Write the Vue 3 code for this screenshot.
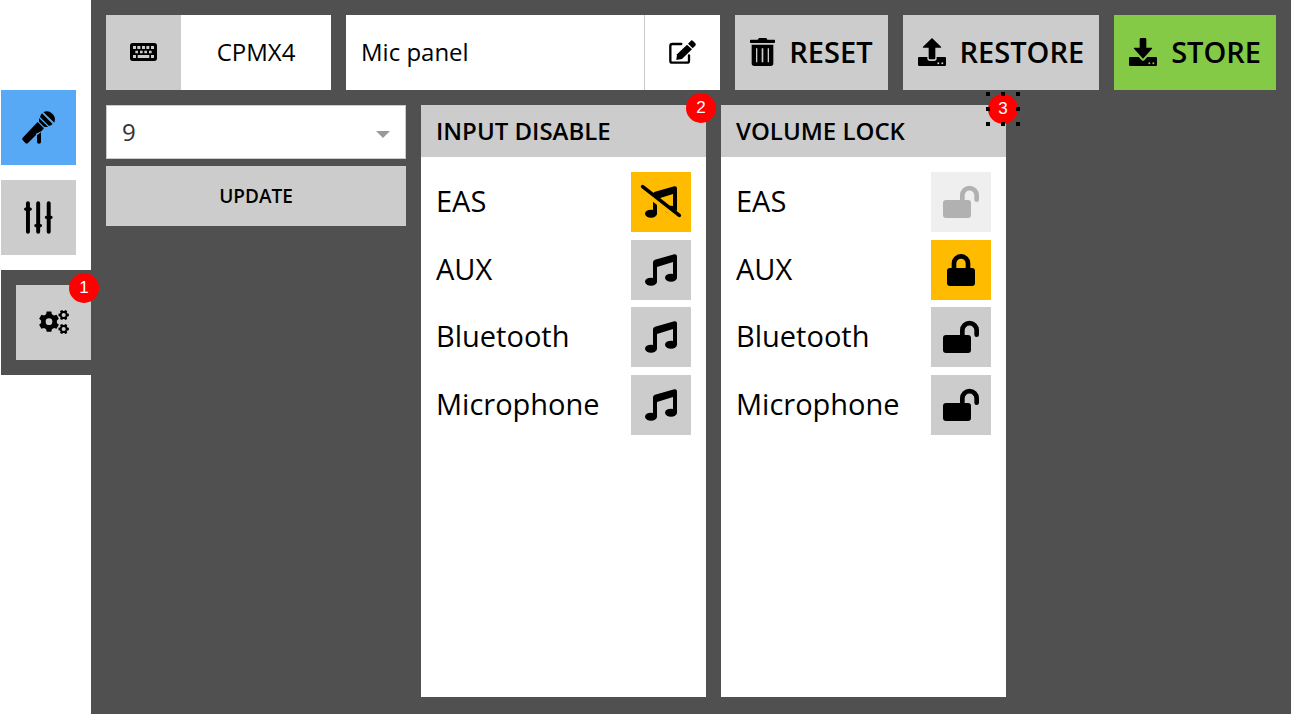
<script setup>
import { ref } from 'vue'

const device = ref('CPMX4')
const panelName = ref('Mic panel')
const preset = ref('9')

const inputs = ref([
  { name: 'EAS', muted: true },
  { name: 'AUX', muted: false },
  { name: 'Bluetooth', muted: false },
  { name: 'Microphone', muted: false },
])

const locks = ref([
  { name: 'EAS', locked: false, disabled: true },
  { name: 'AUX', locked: true, disabled: false },
  { name: 'Bluetooth', locked: false, disabled: false },
  { name: 'Microphone', locked: false, disabled: false },
])

// Outline of a six-toothed gear with a round hole in the middle
function gear(cx, cy, outer, inner, hole, turn) {
  const points = []
  for (let i = 0; i < 6; i++) {
    const mid = turn + i * 60
    for (const [offset, radius] of [[-21, inner], [-13, outer], [13, outer], [21, inner]]) {
      const a = ((mid + offset) * Math.PI) / 180
      points.push(`${(cx + radius * Math.cos(a)).toFixed(1)} ${(cy + radius * Math.sin(a)).toFixed(1)}`)
    }
  }
  return `M${points.join('L')}ZM${cx - hole} ${cy}a${hole} ${hole} 0 1 0 ${2 * hole} 0a${hole} ${hole} 0 1 0 ${-2 * hole} 0Z`
}

const gears = [
  gear(30, 35, 31, 24, 10, 30),
  gear(74, 15, 16, 12, 6, 0),
  gear(74, 57, 16, 12, 6, 0),
].join('')
</script>

<template>
  <div class="app">
    <nav class="sidebar" aria-label="Sections">
      <button class="tile blue" type="button" aria-label="Microphone">
        <svg width="34" height="34" viewBox="0 0 102 102">
          <path d="M64 6A25 25 0 0 1 97 38Z" />
          <path d="M60 10L92 42A25 25 0 0 1 81 48L54 21A25 25 0 0 1 60 10Z" />
          <path d="M51 24L78 50A25 25 0 0 1 66 50L51 35Z" />
          <path d="M47 36L66 55L58 64L42 71V75L18 99Q14 102 10 99L2 90Q-1 87 2 83Z" />
          <path d="M45 76L57 67V96Q57 101 51 101T45 96Z" />
        </svg>
      </button>
      <button class="tile" type="button" aria-label="Mixer">
        <svg width="29" height="33" viewBox="0 0 88 99">
          <path class="line thick" d="M12 6V93M43 6V93M75 6V93" />
          <path class="line knob" d="M5 24H19M36 74H50M68 49H82" />
        </svg>
      </button>
      <div class="active">
        <button class="tile" type="button" aria-label="Settings">
          <svg width="30" height="24" viewBox="0 0 90 72"><path fill-rule="evenodd" :d="gears" /></svg>
        </button>
        <span class="badge">1</span>
      </div>
    </nav>

    <main class="main">
      <header class="toolbar">
        <div class="device">
          <button class="tile" type="button" aria-label="Keyboard">
            <svg width="27" height="18" viewBox="0 0 81 54">
              <path fill-rule="evenodd" d="M8 0H73Q81 0 81 8V46Q81 54 73 54H8Q0 54 0 46V8Q0 0 8 0ZM9 9V18H18V9ZM22 9V18H31V9ZM36 9V18H45V9ZM49 9V18H58V9ZM63 9V18H72V9ZM16 23V31H24V23ZM30 23V31H38V23ZM43 23V31H51V23ZM57 23V31H65V23ZM9 36V45H18V36ZM23 36V45H58V36ZM63 36V45H72V36Z" />
            </svg>
          </button>
          <span class="device-name">{{ device }}</span>
        </div>
        <div class="name">
          <input v-model="panelName" type="text" aria-label="Panel name" />
          <button class="edit" type="button" aria-label="Edit name">
            <svg width="27" height="24" viewBox="0 0 81 72">
              <path class="line pen" d="M37 12H10Q4 12 4 18V62Q4 68 10 68H54Q60 68 60 62V46" />
              <path d="M22 60L24 43L54 14L69 28L39 57Z" />
              <path d="M57 11L65 3Q68 -1 72 3L79 10Q82 13 79 17L71 25Z" />
            </svg>
          </button>
        </div>
        <button class="action" type="button">
          <svg width="25" height="28" viewBox="0 0 75 84">
            <path d="M2 5H23L27 0H49L52 5H73Q75 5 75 7V13Q75 15 73 15H2Q0 15 0 13V7Q0 5 2 5Z" />
            <path fill-rule="evenodd" d="M5 20H70V76Q70 84 62 84H13Q5 84 5 76ZM18 31V73H22V31ZM35 31V73H40V31ZM53 31V73H57V31Z" />
          </svg>
          RESET
        </button>
        <button class="action" type="button">
          <svg width="28" height="28" viewBox="0 0 84 84">
            <path d="M42 0L69 26Q71 29 68 29H52V60Q52 64 48 64H36Q32 64 32 60V29H16Q13 29 15 26Z" />
            <path fill-rule="evenodd" d="M3 57H28V61Q28 69 36 69H48Q56 69 56 61V57H81Q84 57 84 60V80Q84 84 80 84H4Q0 84 0 80V60Q0 57 3 57ZM58 76A3 3 0 1 0 64 76A3 3 0 1 0 58 76ZM70 76A3 3 0 1 0 76 76A3 3 0 1 0 70 76Z" />
          </svg>
          RESTORE
        </button>
        <button class="action green" type="button">
          <svg width="28" height="28" viewBox="0 0 84 84">
            <path d="M36 0H48Q52 0 52 4V29H68Q71 29 69 32L42 62L15 32Q13 29 16 29H32V4Q32 0 36 0Z" />
            <path fill-rule="evenodd" d="M3 57H29L38 67Q42 70 46 67L55 57H81Q84 57 84 60V80Q84 84 80 84H4Q0 84 0 80V60Q0 57 3 57ZM58 76A3 3 0 1 0 64 76A3 3 0 1 0 58 76ZM70 76A3 3 0 1 0 76 76A3 3 0 1 0 70 76Z" />
          </svg>
          STORE
        </button>
      </header>

      <div class="content">
        <div class="controls">
          <div class="select">
            <select v-model="preset" aria-label="Preset"><option>9</option></select>
            <svg class="arrow" width="14" height="7" viewBox="0 0 14 7"><path d="M0 0H14L7 7Z" /></svg>
          </div>
          <button class="update" type="button">UPDATE</button>
        </div>

        <section class="panel">
          <h2>INPUT DISABLE</h2>
          <span class="badge">2</span>
          <ul>
            <li v-for="item in inputs" :key="item.name">
              <span>{{ item.name }}</span>
              <button
                class="toggle" :class="{ on: item.muted }" type="button"
                :aria-label="'Disable ' + item.name" :aria-pressed="item.muted" @click="item.muted = !item.muted"
              >
                <svg width="40" height="34" viewBox="-12 -4 120 102">
                  <path d="M24 76V24Q24 18 30 16L88 0Q96 -1 96 6V71H84V23L36 38V83H24Z" />
                  <ellipse cx="18" cy="82" rx="18" ry="12" />
                  <ellipse cx="78" cy="70" rx="18" ry="12" />
                  <template v-if="item.muted">
                    <path class="line cut" d="M-7 12L103 98" />
                    <path class="line slash" d="M-7 1L103 87" />
                  </template>
                </svg>
              </button>
            </li>
          </ul>
        </section>

        <section class="panel">
          <h2>VOLUME LOCK</h2>
          <span class="badge selected">
            3
            <svg class="handles" width="34" height="34" viewBox="0 0 34 34">
              <path d="M0 0h4v4h-4zM15 0h4v4h-4zM30 0h4v4h-4zM0 15h4v4h-4zM30 15h4v4h-4zM0 30h4v4h-4zM15 30h4v4h-4zM30 30h4v4h-4z" />
            </svg>
          </span>
          <ul>
            <li v-for="item in locks" :key="item.name">
              <span>{{ item.name }}</span>
              <button
                class="toggle" :class="{ on: item.locked }" type="button" :disabled="item.disabled"
                :aria-label="'Lock ' + item.name" :aria-pressed="item.locked" @click="item.locked = !item.locked"
              >
                <svg v-if="item.locked" width="28" height="32" viewBox="0 0 84 96">
                  <rect y="42" width="84" height="54" rx="9" />
                  <path class="line shackle" d="M21 46V28A21 21 0 0 1 63 28V46" />
                </svg>
                <svg v-else width="36" height="32" viewBox="0 0 108 96">
                  <rect y="42" width="84" height="54" rx="9" />
                  <path class="line shackle" d="M58 42V28A21 21 0 0 1 101 28V41" />
                </svg>
              </button>
            </li>
          </ul>
        </section>
      </div>
    </main>
  </div>
</template>

<style>
body {
  margin: 0;
}
</style>

<style scoped>
.app {
  display: flex;
  min-height: 100vh;
  background: #505050;
  color: #000;
  font-family: "Open Sans", "Noto Sans", sans-serif;
}

.app *,
.app {
  box-sizing: border-box;
}

button,
input,
select {
  margin: 0;
  padding: 0;
  border: 0;
  border-radius: 0;
  color: inherit;
  font: inherit;
}

button {
  display: flex;
  align-items: center;
  justify-content: center;
  background: #ccc;
  cursor: pointer;
}

svg {
  display: block;
  flex: none;
  overflow: visible;
}

.line {
  fill: none;
  stroke: #000;
  stroke-linecap: round;
}

.thick { stroke-width: 12; }
.knob { stroke-width: 10; }
.pen { stroke-width: 7; }
.slash { stroke-width: 11; }
.shackle { stroke-width: 14; }

.cut {
  stroke: #fb0;
  stroke-width: 16;
}

.sidebar {
  display: flex;
  flex: none;
  flex-direction: column;
  gap: 15px;
  width: 91px;
  padding: 90px 0 0 1px;
  background: #fff;
}

.tile {
  flex: none;
  width: 75px;
  height: 75px;
  padding-bottom: 1px;
}

.blue {
  background: #57a9f6;
}

.active {
  position: relative;
  padding: 15px 0 15px 15px;
  background: #505050;
}

.badge {
  position: absolute;
  top: -12px;
  right: -10px;
  display: flex;
  align-items: center;
  justify-content: center;
  width: 30px;
  height: 30px;
  border-radius: 50%;
  background: #f00;
  color: #fff;
  font: 17px/30px "Liberation Sans", Arial, sans-serif;
}

.active .badge {
  top: 3px;
  right: -8px;
}

.badge.selected {
  top: -11px;
  right: -12px;
}

.handles {
  position: absolute;
  top: -2px;
  left: -2px;
}

.main {
  display: flex;
  flex: 1;
  flex-direction: column;
  gap: 15px;
  min-width: 0;
  padding: 15px 15px 17px;
}

.toolbar {
  display: flex;
  gap: 15px;
  font-size: 24px;
}

.device {
  display: flex;
  flex: none;
  background: #fff;
}

.device-name {
  width: 150px;
  line-height: 74px;
  text-align: center;
}

.name {
  display: flex;
  flex: 1;
  min-width: 0;
  background: #fff;
}

.name input {
  flex: 1;
  min-width: 0;
  padding: 0 15px 2px;
  background: #fff;
}

.edit {
  width: 76px;
  padding-bottom: 1px;
  border-left: 1px solid #ccc;
  background: #fff;
}

.action {
  flex: none;
  gap: 14px;
  height: 75px;
  padding: 0 15px 2px;
  font-size: 29px;
  font-weight: 600;
}

.green {
  background: #84ca46;
}

.content {
  display: flex;
  flex: 1;
  gap: 15px;
}

.controls {
  display: flex;
  flex: none;
  flex-direction: column;
  gap: 7px;
  width: 300px;
}

.select {
  position: relative;
}

.select select {
  display: block;
  width: 100%;
  height: 54px;
  padding: 0 15px 2px;
  border: 1px solid #ccc;
  appearance: none;
  background: #fff;
  color: #333;
  font-size: 24px;
}

.arrow {
  position: absolute;
  top: 26px;
  right: 16px;
  fill: #999;
  pointer-events: none;
}

.update {
  height: 60px;
  font-size: 19px;
  font-weight: 600;
}

.panel {
  position: relative;
  flex: none;
  width: 285px;
  background: #fff;
}

h2 {
  margin: 0;
  padding: 0 15px;
  background: #ccc;
  font-size: 24px;
  font-weight: 600;
  line-height: 52px;
}

ul {
  display: flex;
  flex-direction: column;
  justify-content: space-between;
  gap: 7px;
  min-height: 293px;
  margin: 0;
  padding: 15px;
  list-style: none;
}

li {
  display: flex;
  justify-content: space-between;
  font-size: 29px;
  line-height: 58px;
}

.toggle {
  width: 60px;
  height: 60px;
}

.toggle.on {
  background: #fb0;
}

.toggle:disabled {
  opacity: 0.3;
  cursor: default;
}
</style>
